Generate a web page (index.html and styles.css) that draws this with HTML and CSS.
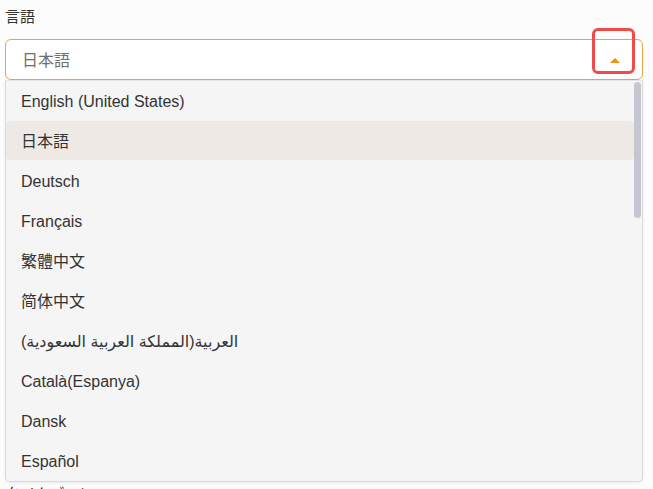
FILE: index.html
```html
<!DOCTYPE html>
<html>
<head>
  <title>言語設定</title>
  <link rel="stylesheet" href="styles.css">
</head>

<body>
  <form class="settings-form">
    <div class="form-field">
      <label class="field-label">言語</label>
      <div class="select-box">
        <div class="select-input">
          <span class="select-value">日本語</span>
          <span class="select-arrow"></span>
        </div>
        <!-- annotation box around the toggle -->
        <div class="highlight-box"></div>

        <div class="dropdown">
          <ul class="dropdown-list">
            <li>English (United States)</li>
            <li class="active">日本語</li>
            <li>Deutsch</li>
            <li>Français</li>
            <li>繁體中文</li>
            <li>简体中文</li>
            <li>العربية(المملكة العربية السعودية)</li>
            <li>Català(Espanya)</li>
            <li>Dansk</li>
            <li>Español</li>
            <li>Suomi</li>
            <li>Italiano</li>
          </ul>
          <div class="scroll-track">
            <div class="scroll-thumb"></div>
          </div>
        </div>
      </div>
    </div>

    <div class="form-field">
      <label class="field-label">タイムゾーン</label>
    </div>
  </form>
</body>
</html>
```

FILE: styles.css
```css
body {
  font-family: 'Liberation Sans', 'Noto Sans CJK JP', 'DejaVu Sans', sans-serif;
  background-color: #fcfcfc;
  color: #333;
  margin: 0;
  padding: 6px 10px 0 5px;
  overflow: hidden;
}

.settings-form {
  display: flex;
  flex-direction: column;
  gap: 0;
}

.field-label {
  display: block;
  font-size: 15px;
  line-height: 22px;
  margin-bottom: 11px;
  color: #333;
}

.select-box {
  position: relative;
}

.select-input {
  display: flex;
  align-items: center;
  justify-content: space-between;
  height: 39px;
  padding: 0 22px 2px 16px;
  box-sizing: border-box;
  height: 41px;
  background-color: #fff;
  border: 1px solid #e9a53f;
  border-radius: 6px;
}

.select-value {
  font-size: 16px;
  color: #6e6e6e;
}

/* small up triangle */
.select-arrow {
  width: 0;
  height: 0;
  border-left: 5px solid transparent;
  border-right: 5px solid transparent;
  border-bottom: 5px solid #f0910c;
  margin-top: 4px;
}

.highlight-box {
  position: absolute;
  top: -11px;
  left: 587px;
  width: 37px;
  height: 40px;
  border: 3px solid #f04b4b;
  border-radius: 6px;
}

/* Dropdown panel, open under the toggle */
.dropdown {
  display: flex;
  height: 400px;
  background-color: #f5f5f5;
  border: 1px solid #dadada;
  border-top-color: #e6e6e6;
  border-radius: 0 0 5px 5px;
  box-shadow: 0 1px 3px rgba(0, 0, 0, 0.08);
  overflow: hidden;
}

.dropdown-list {
  flex: 1;
  list-style: none;
  margin: 0;
  padding: 0;
}

.dropdown-list li {
  height: 40px;
  line-height: 38px;
  padding: 2px 15px 0;
  box-sizing: border-box;
  font-size: 16px;
  color: #333;
  border-radius: 4px;
  white-space: nowrap;
}

.dropdown-list li.active {
  background-color: #eee9e5;
  height: 39px;
  margin-bottom: 1px;
  line-height: 37px;
}

.scroll-track {
  width: 8px;
  padding-top: 1px;
}

.scroll-thumb {
  width: 7px;
  height: 136px;
  background-color: #c6c6d2;
  border-radius: 4px;
}

.form-field + .form-field {
  margin-top: 1px;
}
```
